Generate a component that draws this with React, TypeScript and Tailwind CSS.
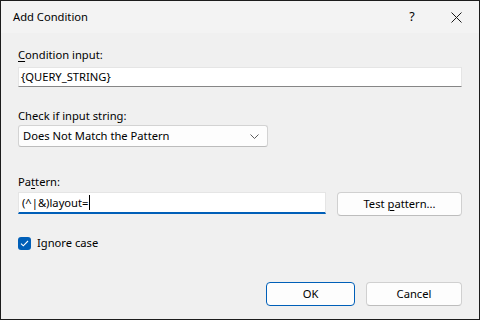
import React from 'react';

const font = { fontFamily: '"Segoe UI", "Noto Sans", "Open Sans", sans-serif' };

function Accel({ children }: { children: React.ReactNode }) {
  return <span className="underline underline-offset-2 decoration-1">{children}</span>;
}

function Button({ children, primary }: { children: React.ReactNode; primary?: boolean }) {
  return (
    <button
      className={
        primary
          ? 'flex h-[24px] w-full items-center justify-center rounded-[4px] border border-[#005fb8] bg-[#fdfdfd] text-black'
          : 'flex h-[24px] w-full items-center justify-center rounded-[4px] border border-[#d0d0d0] border-b-[#bdbdbd] bg-[#fdfdfd] text-black'
      }
    >
      {children}
    </button>
  );
}

export default function App() {
  return (
    <div
      className="flex h-[320px] w-[480px] flex-col border border-[#1c1c1c] bg-[#f0f0f0] text-[11.2px] leading-[16px] text-black"
      style={font}
    >
      <div className="flex h-[32px] shrink-0 items-center bg-[#f3f3f3] pl-[12px]">
        <span className="flex-1">Add Condition</span>
        <span className="flex w-[46px] justify-center pl-[4px] text-[12.5px]">?</span>
        <span className="flex w-[46px] justify-center">
          <svg width="11" height="11" viewBox="0 0 11 11">
            <path d="M0.5 0.5 L10.5 10.5 M10.5 0.5 L0.5 10.5" stroke="#1a1a1a" strokeWidth="1" />
          </svg>
        </span>
      </div>

      <div className="flex flex-1 flex-col px-[17px] pt-[14px]">
        <div>
          <Accel>C</Accel>ondition input:
        </div>
        <div className="mt-[4px] flex h-[20px] items-center border border-[#e5e5e5] border-b-[#868686] bg-white pl-[2px]">
          {'{QUERY_STRING}'}
        </div>

        <div className="mt-[21px]">Check if input string:</div>
        <div className="mt-[1px] flex h-[22px] w-[250px] items-center justify-between rounded-[3px] border border-[#d3d3d3] border-b-[#bcbcbc] bg-[#fdfdfd] pl-[4px] pr-[8px]">
          <span>Does Not Match the Pattern</span>
          <svg width="9" height="5" viewBox="0 0 9 5">
            <path d="M0.5 0.5 L4.5 4.5 L8.5 0.5" fill="none" stroke="#5c5c5c" strokeWidth="1" />
          </svg>
        </div>

        <div className="mt-[27px]">
          Pa<Accel>t</Accel>tern:
        </div>
        <div className="mt-[2px] flex items-start gap-[11px]">
          <div className="flex h-[22px] w-[308px] items-center border border-[#e5e5e5] border-b-2 border-b-[#005fb8] bg-white pl-[3px]">
            <span>(^|&amp;)layout=</span>
            <span className="ml-[1px] inline-block h-[15px] w-[1px] bg-black" />
          </div>
          <div className="w-[125px]">
            <Button>
              <span>
                Test <Accel>p</Accel>attern...
              </span>
            </Button>
          </div>
        </div>

        <div className="mt-[19px] flex h-[16px] items-center gap-[6px]">
          <span className="flex h-[13px] w-[13px] items-center justify-center rounded-[3px] bg-[#005fb8]">
            <svg width="9" height="7" viewBox="0 0 9 7">
              <path d="M1 3.6 L3.3 5.8 L8 1" fill="none" stroke="white" strokeWidth="1.1" />
            </svg>
          </span>
          <span>Ignore case</span>
        </div>

        <div className="mt-[31px] flex justify-end gap-[11px]">
          <div className="w-[89px]">
            <Button primary>OK</Button>
          </div>
          <div className="w-[96px]">
            <Button>Cancel</Button>
          </div>
        </div>
      </div>
    </div>
  );
}
